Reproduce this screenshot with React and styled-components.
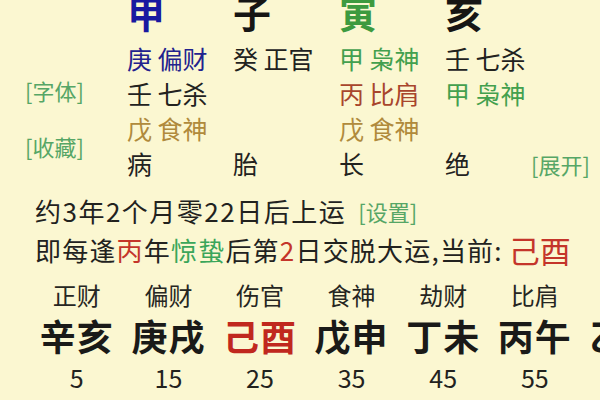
import React from 'react';
import styled, { createGlobalStyle } from 'styled-components';

const GlobalStyle = createGlobalStyle`
  body {
    margin: 0;
    background: #fbf7d1;
    font-family: 'Noto Sans CJK SC', 'Noto Sans', sans-serif;
    overflow: hidden;
  }
`;

const Page = styled.div`
  width: 600px;
  height: 400px;
  overflow: hidden;
  background: #fbf7d1;
  color: #22221e;
`;

const Chart = styled.div`
  display: grid;
  grid-template-columns: 127px 106px 106px 106px 86px 1fr;
  margin-top: -8px;
`;

const SideColumn = styled.div`
  display: flex;
  flex-direction: column;
  gap: 26px;
  padding: 83px 0 0 25px;
`;

const LinkLabel = styled.span`
  color: #56a666;
  font-size: ${(p) => p.size || 22}px;
  line-height: 30px;
  white-space: nowrap;
`;

const Pillar = styled.div`
  display: grid;
  grid-template-rows: 49px repeat(4, 35px);
`;

const Stem = styled.div`
  font-size: 38px;
  font-weight: 700;
  line-height: 40px;
  height: 40px;
  color: ${(p) => p.color};
`;

const Line = styled.div`
  font-size: 25px;
  line-height: 35px;
  white-space: nowrap;
  color: ${(p) => p.color || '#22221e'};
  grid-row: ${(p) => p.row};
`;

const ExpandColumn = styled.div`
  display: flex;
  flex-direction: column;
  justify-content: flex-end;
  padding-bottom: 2px;
`;

const Note = styled.div`
  padding-left: 35px;
  font-size: 26px;
  letter-spacing: ${(p) => p.spacing ?? 1.5}px;
  line-height: 38px;
  white-space: nowrap;
  margin-top: ${(p) => p.top || 0}px;
  height: ${(p) => p.height || 38}px;
  display: flex;
  align-items: center;
`;

const Mark = styled.span`
  color: ${(p) => p.color};
  font-size: ${(p) => (p.size ? `${p.size}px` : 'inherit')};
  letter-spacing: ${(p) => (p.size ? '0' : 'inherit')};
  margin-left: ${(p) => p.gap || 0}px;
`;

const Cycles = styled.div`
  display: grid;
  grid-template-columns: repeat(7, 91.6px);
  grid-template-rows: 34px 46px 38px;
  grid-auto-flow: column;
  padding-left: 31px;
  margin-top: 8px;
  width: 700px;
`;

const God = styled.div`
  font-size: 24px;
  line-height: 34px;
  text-align: center;
  color: #262622;
`;

const CyclePillar = styled.div`
  font-size: 36px;
  font-weight: 700;
  line-height: 46px;
  text-align: center;
  letter-spacing: 1px;
  color: ${(p) => p.color || '#1a1a18'};
`;

const Age = styled.div`
  font-size: 25px;
  line-height: 38px;
  text-align: center;
  color: #22221e;
`;

const BLUE = '#22228e';
const DARK = '#22221e';
const GREEN = '#43a04e';
const BROWN = '#a8452c';
const GOLD = '#b08a3c';
const RED = '#c4352a';

const pillars = [
  {
    stem: '甲', color: '#1818a0',
    hidden: [{ t: '庚 偏财', c: BLUE }, { t: '壬 七杀', c: DARK }, { t: '戊 食神', c: GOLD }],
    stage: '病',
  },
  { stem: '子', color: '#161614', hidden: [{ t: '癸 正官', c: DARK }], stage: '胎' },
  {
    stem: '寅', color: '#3d9a3f',
    hidden: [{ t: '甲 枭神', c: GREEN }, { t: '丙 比肩', c: BROWN }, { t: '戊 食神', c: GOLD }],
    stage: '长',
  },
  {
    stem: '亥', color: '#161614',
    hidden: [{ t: '壬 七杀', c: DARK }, { t: '甲 枭神', c: GREEN }],
    stage: '绝',
  },
];

const cycles = [
  { god: '正财', gz: '辛亥', age: 5 },
  { god: '偏财', gz: '庚戌', age: 15 },
  { god: '伤官', gz: '己酉', age: 25, color: '#c0281e' },
  { god: '食神', gz: '戊申', age: 35 },
  { god: '劫财', gz: '丁未', age: 45 },
  { god: '比肩', gz: '丙午', age: 55 },
  { god: '正印', gz: '乙巳', age: 65 },
];

export default function App() {
  return (
    <Page>
      <GlobalStyle />
      <Chart>
        <SideColumn>
          <LinkLabel>[字体]</LinkLabel>
          <LinkLabel>[收藏]</LinkLabel>
        </SideColumn>
        {pillars.map((p) => (
          <Pillar key={p.stem}>
            <Stem color={p.color}>{p.stem}</Stem>
            {p.hidden.map((h, i) => (
              <Line key={h.t + i} color={h.c} row={i + 2}>{h.t}</Line>
            ))}
            <Line row={5}>{p.stage}</Line>
          </Pillar>
        ))}
        <ExpandColumn>
          <LinkLabel>[展开]</LinkLabel>
        </ExpandColumn>
      </Chart>

      <Note top={11}>
        约3年2个月零22日后上运
        <Mark color="#56a666" size={22} gap={12}>[设置]</Mark>
      </Note>
      <Note height={40} spacing={1.2}>
        即每逢<Mark color={RED}>丙</Mark>年<Mark color="#3aa65a">惊蛰</Mark>后第
        <Mark color={RED}>2</Mark>日交脱大运,当前:
        <Mark color={RED} size={31} gap={6}>己酉</Mark>
      </Note>

      <Cycles>
        {cycles.map((c) => (
          <React.Fragment key={c.gz}>
            <God>{c.god}</God>
            <CyclePillar color={c.color}>{c.gz}</CyclePillar>
            <Age>{c.age}</Age>
          </React.Fragment>
        ))}
      </Cycles>
    </Page>
  );
}
